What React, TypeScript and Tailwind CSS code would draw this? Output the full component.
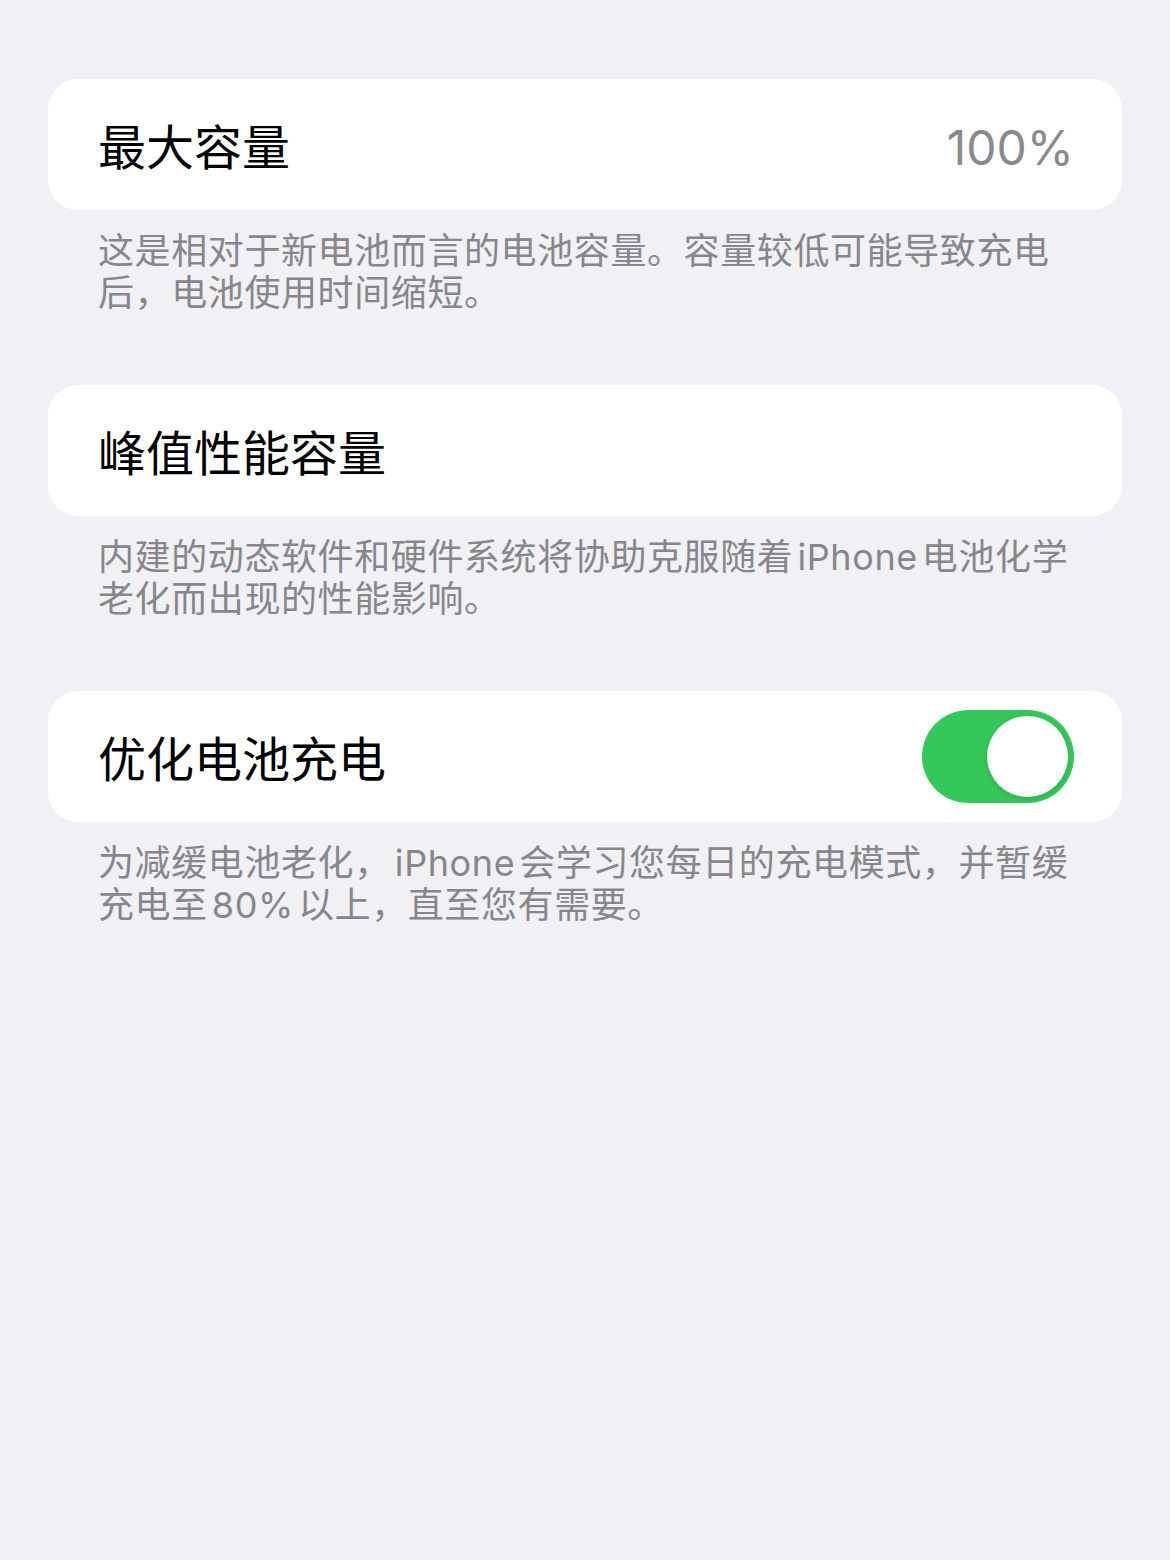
import React from "react";

const FONT = "font-['Inter','Noto_Sans_CJK_SC',sans-serif]";

function Latin({ children }: { children: React.ReactNode }) {
  return <span className="mx-[4px]">{children}</span>;
}

function Footer({ lines }: { lines: React.ReactNode[] }) {
  return (
    <div className="pt-[20px] pl-[50px] pr-[40px] text-[36px] leading-[42px] text-[#86868b] tracking-[0.6px]">
      {lines.map((l, i) => (
        <div key={i} className="whitespace-nowrap">
          {l}
        </div>
      ))}
    </div>
  );
}

function Toggle() {
  return (
    <div className="w-[152px] h-[93px] rounded-full bg-[#34c759] flex items-center justify-end pr-[6px]">
      <div className="w-[81px] h-[81px] rounded-full bg-white shadow-[0_2px_6px_rgba(0,0,0,0.12)]" />
    </div>
  );
}

export default function App() {
  return (
    <div className={`min-h-[1560px] bg-[#f0f0f5] px-[48px] pt-[79px] ${FONT}`}>
      <div className="h-[131px] rounded-[30px] bg-white flex items-center justify-between pl-[50px] pr-[48px]">
        <span className="pt-[6px] text-[48px] text-black">最大容量</span>
        <span className="pt-[6px] text-[48px] text-[#8a8a8e]">100%</span>
      </div>
      <Footer
        lines={[
          "这是相对于新电池而言的电池容量。容量较低可能导致充电",
          "后，电池使用时间缩短。",
        ]}
      />

      <div className="mt-[71px] h-[131px] rounded-[30px] bg-white flex items-center pl-[50px] pr-[48px]">
        <span className="pt-[6px] text-[48px] text-black">峰值性能容量</span>
      </div>
      <Footer
        lines={[
          <>
            内建的动态软件和硬件系统将协助克服随着<Latin>iPhone</Latin>电池化学
          </>,
          "老化而出现的性能影响。",
        ]}
      />

      <div className="mt-[71px] h-[131px] rounded-[30px] bg-white flex items-center justify-between pl-[50px] pr-[48px]">
        <span className="pt-[6px] text-[48px] text-black">优化电池充电</span>
        <Toggle />
      </div>
      <Footer
        lines={[
          <>
            为减缓电池老化，<Latin>iPhone</Latin>会学习您每日的充电模式，并暂缓
          </>,
          <>
            充电至<Latin>80%</Latin>以上，直至您有需要。
          </>,
        ]}
      />
    </div>
  );
}
